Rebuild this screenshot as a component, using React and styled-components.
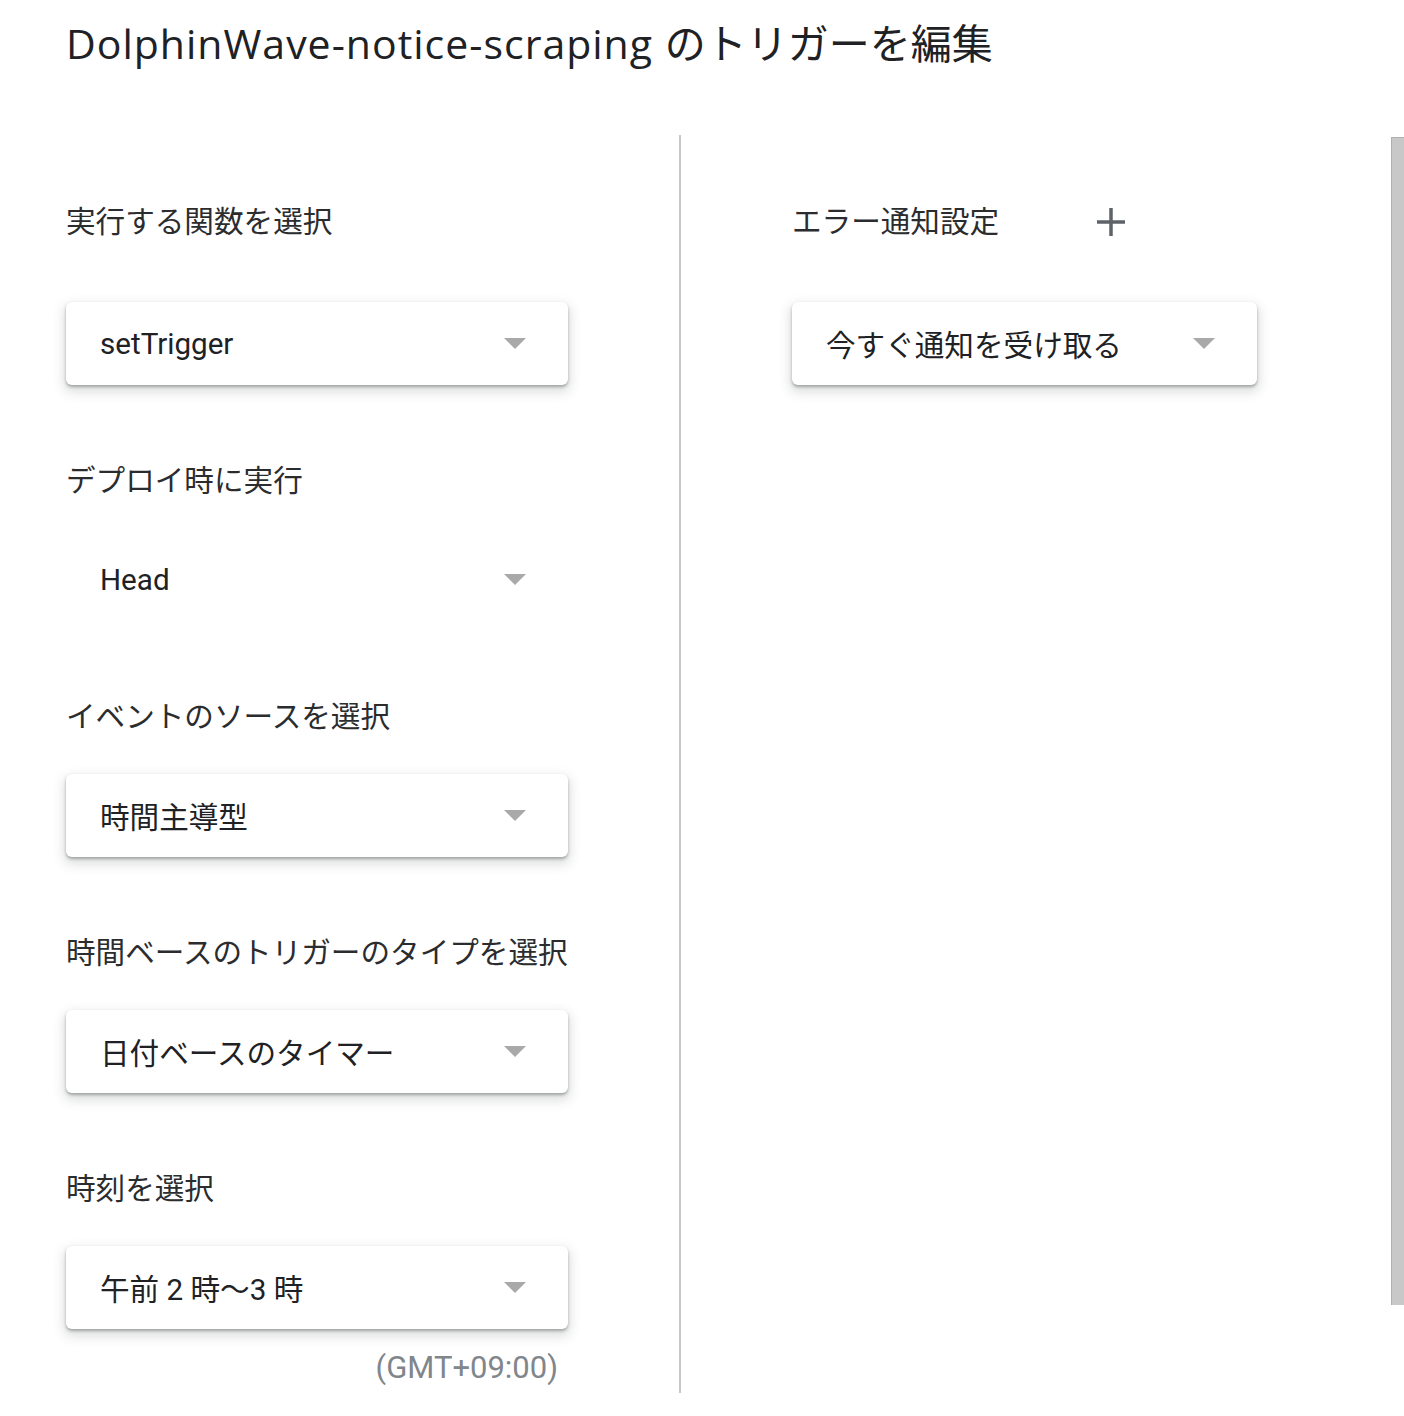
import styled, { createGlobalStyle } from "styled-components";

const GlobalStyle = createGlobalStyle`
  body {
    margin: 0;
    background: #ffffff;
    font-family: Roboto, "Noto Sans CJK JP", sans-serif;
    color: #202124;
  }
`;

const Page = styled.div`
  width: 1404px;
  display: flex;
  flex-direction: column;
`;

const Title = styled.h1`
  margin: 19px 0 0 66px;
  font-family: "Open Sans", "Noto Sans CJK JP", sans-serif;
  font-size: 41px;
  font-weight: 400;
  line-height: 48px;
  height: 48px;
  letter-spacing: 1px;
  white-space: nowrap;
  color: #202124;
`;

const TitleJa = styled.span`
  letter-spacing: 0;
`;

const Body = styled.div`
  display: flex;
  margin-top: 68px;
`;

const Column = styled.div`
  width: ${(p) => p.$width}px;
  padding: 67px 0 7px ${(p) => p.$indent}px;
  box-sizing: border-box;
  display: flex;
  flex-direction: column;
`;

const Divider = styled.div`
  width: 2px;
  background: #c8c8c8;
`;

const Label = styled.div`
  display: flex;
  align-items: center;
  gap: 96px;
  height: 40px;
  margin-top: ${(p) => (p.$first ? 0 : 76)}px;
  font-size: 29.6px;
  line-height: 40px;
  color: #2b2c2e;
`;

const Select = styled.div`
  width: ${(p) => p.$width}px;
  height: 83px;
  margin-top: ${(p) => (p.$first ? 60 : 37)}px;
  padding: 0 42px 0 34px;
  box-sizing: border-box;
  display: flex;
  align-items: center;
  justify-content: space-between;
  border-radius: 6px;
  background: #ffffff;
  font-size: 29.6px;
  color: #202124;
  box-shadow: ${(p) =>
    p.$flat
      ? "none"
      : "0 2px 3px rgba(60, 64, 67, 0.38), 0 5px 12px 2px rgba(60, 64, 67, 0.18)"};
`;

const Arrow = styled.span`
  width: 0;
  height: 0;
  border-left: 11.5px solid transparent;
  border-right: 11.5px solid transparent;
  border-top: 11.5px solid #a9a9a9;
`;

const Note = styled.div`
  width: 492px;
  margin-top: 21px;
  text-align: right;
  font-size: 31px;
  line-height: 36px;
  color: #80868b;
`;

const AddButton = styled.button`
  width: 32px;
  height: 32px;
  padding: 0;
  border: none;
  background: transparent;
  display: flex;
  align-items: center;
  justify-content: center;
  color: #5f6368;
  cursor: pointer;
`;

const Scrollbar = styled.div`
  width: 13px;
  height: 1168px;
  margin-top: 2px;
  box-sizing: border-box;
  background: #c8c8c8;
  border-left: 1px solid #b0b0b0;
  border-top: 1px solid #b0b0b0;
`;

const Dropdown = ({ value, width = 502, first, flat }) => (
  <Select $width={width} $first={first} $flat={flat}>
    <span>{value}</span>
    <Arrow />
  </Select>
);

export default function App() {
  return (
    <Page>
      <GlobalStyle />
      <Title>
        DolphinWave-notice-scraping <TitleJa>のトリガーを編集</TitleJa>
      </Title>
      <Body>
        <Column $width={679} $indent={66}>
          <Label $first>実行する関数を選択</Label>
          <Dropdown value="setTrigger" first />
          <Label>デプロイ時に実行</Label>
          <Dropdown value="Head" flat />
          <Label>イベントのソースを選択</Label>
          <Dropdown value="時間主導型" />
          <Label>時間ベースのトリガーのタイプを選択</Label>
          <Dropdown value="日付ベースのタイマー" />
          <Label>時刻を選択</Label>
          <Dropdown value="午前 2 時〜3 時" />
          <Note>(GMT+09:00)</Note>
        </Column>
        <Divider />
        <Column $width={710} $indent={111}>
          <Label $first>
            エラー通知設定
            <AddButton aria-label="追加">
              <svg width="28" height="28" viewBox="0 0 28 28">
                <path d="M14 0v28M0 14h28" stroke="currentColor" strokeWidth="3.5" />
              </svg>
            </AddButton>
          </Label>
          <Dropdown value="今すぐ通知を受け取る" width={465} first />
        </Column>
        <Scrollbar />
      </Body>
    </Page>
  );
}
